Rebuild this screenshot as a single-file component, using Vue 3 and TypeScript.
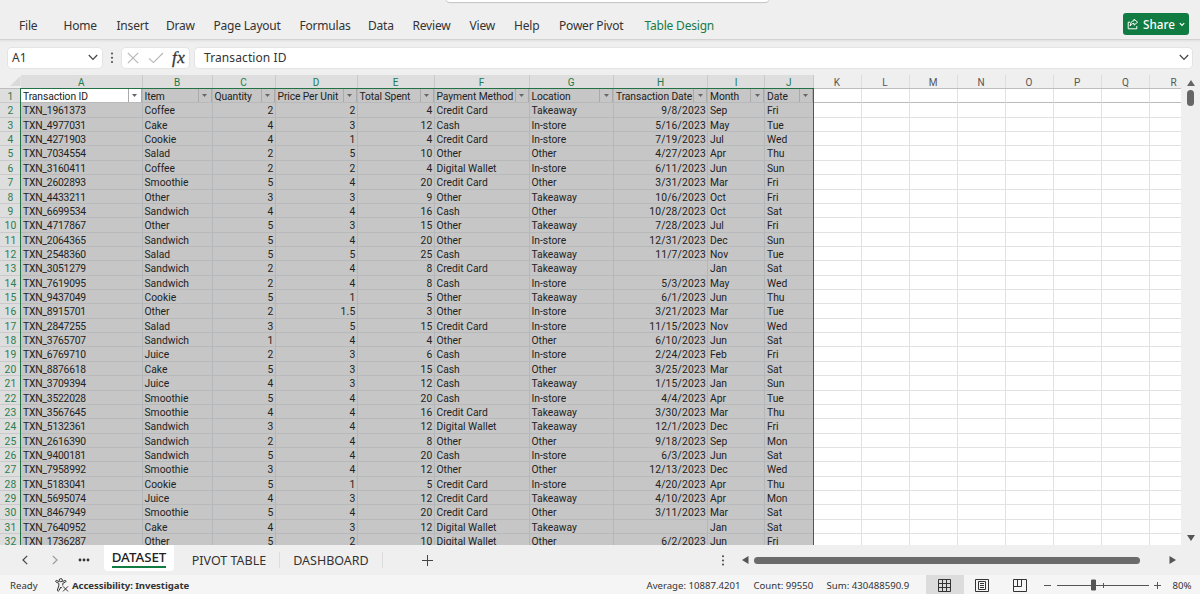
<script setup lang="ts">
interface Column {
  letter: string
  title: string
  numeric: boolean
}

const columns: Column[] = [
  { letter: 'A', title: 'Transaction ID', numeric: false },
  { letter: 'B', title: 'Item', numeric: false },
  { letter: 'C', title: 'Quantity', numeric: true },
  { letter: 'D', title: 'Price Per Unit', numeric: true },
  { letter: 'E', title: 'Total Spent', numeric: true },
  { letter: 'F', title: 'Payment Method', numeric: false },
  { letter: 'G', title: 'Location', numeric: false },
  { letter: 'H', title: 'Transaction Date', numeric: true },
  { letter: 'I', title: 'Month', numeric: false },
  { letter: 'J', title: 'Date', numeric: false },
]
const emptyLetters = ['K', 'L', 'M', 'N', 'O', 'P', 'Q', 'R']

const source = `TXN_1961373|Coffee|2|2|4|Credit Card|Takeaway|9/8/2023|Sep|Fri
TXN_4977031|Cake|4|3|12|Cash|In-store|5/16/2023|May|Tue
TXN_4271903|Cookie|4|1|4|Credit Card|In-store|7/19/2023|Jul|Wed
TXN_7034554|Salad|2|5|10|Other|Other|4/27/2023|Apr|Thu
TXN_3160411|Coffee|2|2|4|Digital Wallet|In-store|6/11/2023|Jun|Sun
TXN_2602893|Smoothie|5|4|20|Credit Card|Other|3/31/2023|Mar|Fri
TXN_4433211|Other|3|3|9|Other|Takeaway|10/6/2023|Oct|Fri
TXN_6699534|Sandwich|4|4|16|Cash|Other|10/28/2023|Oct|Sat
TXN_4717867|Other|5|3|15|Other|Takeaway|7/28/2023|Jul|Fri
TXN_2064365|Sandwich|5|4|20|Other|In-store|12/31/2023|Dec|Sun
TXN_2548360|Salad|5|5|25|Cash|Takeaway|11/7/2023|Nov|Tue
TXN_3051279|Sandwich|2|4|8|Credit Card|Takeaway||Jan|Sat
TXN_7619095|Sandwich|2|4|8|Cash|In-store|5/3/2023|May|Wed
TXN_9437049|Cookie|5|1|5|Other|Takeaway|6/1/2023|Jun|Thu
TXN_8915701|Other|2|1.5|3|Other|In-store|3/21/2023|Mar|Tue
TXN_2847255|Salad|3|5|15|Credit Card|In-store|11/15/2023|Nov|Wed
TXN_3765707|Sandwich|1|4|4|Other|Other|6/10/2023|Jun|Sat
TXN_6769710|Juice|2|3|6|Cash|In-store|2/24/2023|Feb|Fri
TXN_8876618|Cake|5|3|15|Cash|Other|3/25/2023|Mar|Sat
TXN_3709394|Juice|4|3|12|Cash|Takeaway|1/15/2023|Jan|Sun
TXN_3522028|Smoothie|5|4|20|Cash|In-store|4/4/2023|Apr|Tue
TXN_3567645|Smoothie|4|4|16|Credit Card|Takeaway|3/30/2023|Mar|Thu
TXN_5132361|Sandwich|3|4|12|Digital Wallet|Takeaway|12/1/2023|Dec|Fri
TXN_2616390|Sandwich|2|4|8|Other|Other|9/18/2023|Sep|Mon
TXN_9400181|Sandwich|5|4|20|Cash|In-store|6/3/2023|Jun|Sat
TXN_7958992|Smoothie|3|4|12|Other|Other|12/13/2023|Dec|Wed
TXN_5183041|Cookie|5|1|5|Credit Card|In-store|4/20/2023|Apr|Thu
TXN_5695074|Juice|4|3|12|Credit Card|Takeaway|4/10/2023|Apr|Mon
TXN_8467949|Smoothie|5|4|20|Credit Card|Other|3/11/2023|Mar|Sat
TXN_7640952|Cake|4|3|12|Digital Wallet|Takeaway||Jan|Sat
TXN_1736287|Other|5|2|10|Digital Wallet|Other|6/2/2023|Jun|Fri`
const rows: string[][] = source.split('\n').map((line) => line.split('|'))

const menu = ['File', 'Home', 'Insert', 'Draw', 'Page Layout', 'Formulas', 'Data', 'Review', 'View', 'Help', 'Power Pivot', 'Table Design']
</script>

<template>
  <div class="app">
    <header class="ribbon">
      <div class="search-edge"></div>
      <nav class="menu">
        <span v-for="m in menu" :key="m" :class="{ active: m === 'Table Design' }">{{ m }}</span>
      </nav>
      <button class="share">
        <svg width="12" height="12" viewBox="0 0 12 12" fill="none" stroke="#fff" stroke-width="1">
          <path d="M3 4.2H1.2v6.6h8.6V8" />
          <path d="M7 1.2l3.6 3L7 7.2V5.4C5.2 5.4 4.2 6.2 3.2 8c.1-3.3 1.2-5 3.8-5.2z" stroke-linejoin="round" />
        </svg>
        <span>Share</span>
        <svg width="6" height="5" viewBox="0 0 6 5" fill="none" stroke="#fff" stroke-width="1.2"><path d="M.8 1.2L3 3.5l2.2-2.3" /></svg>
      </button>
    </header>

    <section class="formula-bar">
      <div class="name-box">
        <span>A1</span>
        <svg width="10" height="7" viewBox="0 0 10 7" fill="none" stroke="#444" stroke-width="1.2"><path d="M.8 1L5 5.4 9.2 1" /></svg>
      </div>
      <svg class="grip" width="4" height="12" viewBox="0 0 4 12" fill="#444"><circle cx="2" cy="1.5" r="1" /><circle cx="2" cy="5.7" r="1" /><circle cx="2" cy="9.9" r="1" /></svg>
      <div class="actions">
        <svg width="12" height="12" viewBox="0 0 12 12" fill="none" stroke="#b4b4b4" stroke-width="1.1"><path d="M.8.8l10.4 10.4M11.2.8L.8 11.2" /></svg>
        <svg width="16" height="12" viewBox="0 0 16 12" fill="none" stroke="#b4b4b4" stroke-width="1.1"><path d="M1 6.4L5.4 10.6 15 1" /></svg>
        <i class="fx">fx</i>
      </div>
      <div class="formula">
        <span>Transaction ID</span>
        <svg width="10" height="7" viewBox="0 0 10 7" fill="none" stroke="#444" stroke-width="1.2"><path d="M.8 1L5 5.4 9.2 1" /></svg>
      </div>
    </section>

    <main class="workspace">
      <div class="sheet">
        <div class="line letters">
          <div class="corner"><svg width="11" height="10" viewBox="0 0 11 10"><path d="M10.5 0v10H0z" fill="#dadada" /></svg></div>
          <div v-for="c in columns" :key="c.letter" class="letter picked">{{ c.letter }}</div>
          <div v-for="l in emptyLetters" :key="l" class="letter">{{ l }}</div>
        </div>
        <div class="line titles">
          <div class="row-no">1</div>
          <div v-for="(c, i) in columns" :key="c.letter" class="cell title" :class="{ current: i === 0 }">
            <span>{{ c.title }}</span>
            <b class="filter"><svg width="5" height="3" viewBox="0 0 5 3"><path d="M0 0h5L2.5 3z" fill="#666" /></svg></b>
          </div>
          <div v-for="l in emptyLetters" :key="l" class="cell blank"></div>
        </div>
        <div v-for="(r, n) in rows" :key="r[0]" class="line">
          <div class="row-no">{{ n + 2 }}</div>
          <div v-for="(v, i) in r" :key="i" class="cell" :class="{ numeric: columns[i].numeric, id: i === 0 }">{{ v }}</div>
          <div v-for="l in emptyLetters" :key="l" class="cell blank"></div>
        </div>
        <div class="selection"></div>
      </div>
      <aside class="v-scroll">
        <svg width="8" height="6" viewBox="0 0 8 6"><path d="M4 0l4 6H0z" fill="#666" /></svg>
        <div class="v-thumb"></div>
        <svg class="down" width="8" height="6" viewBox="0 0 8 6"><path d="M0 0h8L4 6z" fill="#555" /></svg>
      </aside>
    </main>

    <section class="tabs">
      <svg class="prev" width="6" height="10" viewBox="0 0 6 10" fill="none" stroke="#444" stroke-width="1.2"><path d="M5.2.8L1 5l4.2 4.2" /></svg>
      <svg class="next" width="6" height="10" viewBox="0 0 6 10" fill="none" stroke="#999" stroke-width="1.2"><path d="M.8.8L5 5 .8 9.2" /></svg>
      <svg class="more" width="12" height="4" viewBox="0 0 12 4" fill="#333"><circle cx="2" cy="2" r="1.4" /><circle cx="6" cy="2" r="1.4" /><circle cx="10" cy="2" r="1.4" /></svg>
      <div class="tab on"><span>DATASET</span></div>
      <div class="tab pivot">PIVOT TABLE</div>
      <div class="tab dash">DASHBOARD</div>
      <svg class="plus" width="11" height="11" viewBox="0 0 11 11" stroke="#444" stroke-width="1"><path d="M5.5 0v11M0 5.5h11" /></svg>
      <svg class="dots" width="4" height="11" viewBox="0 0 4 11" fill="#444"><circle cx="2" cy="1.3" r="1" /><circle cx="2" cy="5.4" r="1" /><circle cx="2" cy="9.5" r="1" /></svg>
      <div class="h-scroll">
        <svg width="7" height="8" viewBox="0 0 7 8"><path d="M6.5 0v8L0 4z" fill="#555" /></svg>
        <div class="h-thumb"></div>
        <svg class="right" width="7" height="8" viewBox="0 0 7 8"><path d="M.5 0v8L7 4z" fill="#555" /></svg>
      </div>
    </section>

    <footer class="status">
      <span class="ready">Ready</span>
      <svg class="person" width="14" height="14" viewBox="0 0 14 14" fill="none" stroke="#333" stroke-width="1">
        <circle cx="5.8" cy="2.2" r="1.6" />
        <path d="M4.2 3.6L1.6 2.5C.6 2.2.2 3.6 1 4l2.8 1.3v2.5L2.4 12c-.2 1.1 1.2 1.5 1.6.6L5.8 9l1 1.2M7.4 3.6L10 2.5c1-.3 1.4 1.1.6 1.5L7.8 5.3v2.2M8 8.4l5 5M13 8.4l-5 5" />
      </svg>
      <span class="access">Accessibility: Investigate</span>
      <span class="average">Average: 10887.4201</span>
      <span class="count">Count: 99550</span>
      <span class="sum">Sum: 430488590.9</span>
      <div class="view active">
        <svg width="13" height="13" viewBox="0 0 13 13" fill="none" stroke="#333"><path d="M.5.5h12v12H.5zM.5 4.5h12M.5 8.5h12M4.5.5v12M8.5.5v12" /></svg>
      </div>
      <div class="view">
        <svg width="14" height="13" viewBox="0 0 14 13" fill="none" stroke="#333"><path d="M.5.5h13v12H.5zM3.5 2.5h7v8h-7zM5 4.5h4M5 6.5h4M5 8.5h4" /></svg>
      </div>
      <div class="view">
        <svg width="14" height="13" viewBox="0 0 14 13" fill="none" stroke="#333"><path d="M.5.5h13v12H.5zM4.5.5v7M.5 7.5h8V.5" /></svg>
      </div>
      <svg class="zoom" width="120" height="12" viewBox="0 0 120 12" stroke="#555" fill="none">
        <path d="M1 6.5h7M14 6.5h92M111 6.5h7M114.5 3v7M60.5 4v5" />
        <path d="M48.5 1h4v10h-4z" fill="#555" />
      </svg>
      <span class="percent">80%</span>
    </footer>
  </div>
</template>

<style>
body {
  margin: 0;
  overflow: hidden;
}
</style>

<style scoped>
.app {
  width: 1200px;
  height: 594px;
  display: flex;
  flex-direction: column;
  background: #efefef;
  color: #333;
  font-family: 'Noto Sans', 'Open Sans', sans-serif;
  overflow: hidden;
  white-space: nowrap;
}
svg { display: block; flex: none; }
.ribbon {
  position: relative;
  box-sizing: border-box;
  height: 40px;
  flex: none;
  border-bottom: 1px solid #d2d2d2;
  box-shadow: 0 1px 2px #dedede;
}
.search-edge {
  position: absolute;
  left: 446px;
  top: -8px;
  width: 323px;
  height: 10px;
  background: #fff;
  border-radius: 4px;
  box-shadow: 0 1px 1px #c4c4c4;
}
.menu {
  display: grid;
  grid-template-columns: 44.5px 53px 49.5px 47.5px 86px 68.5px 44.5px 57px 44.5px 45px 85.5px 80px;
  padding-left: 19px;
  line-height: 18px;
  padding-top: 17px;
  font-size: 12px;
  letter-spacing: -0.2px;
}
.menu .active { color: #1b7a45; }
.share {
  position: absolute;
  left: 1123px;
  top: 13px;
  width: 66px;
  height: 22px;
  border: 0;
  border-radius: 3px;
  background: #107c41;
  color: #fff;
  display: flex;
  align-items: center;
  padding: 0 4px;
  gap: 3px;
  font: 500 11.7px 'Noto Sans', sans-serif;
}
.share span { flex: 1; }
.formula-bar {
  height: 35px;
  flex: none;
  display: flex;
  align-items: center;
  padding: 0 8px;
  font-size: 12px;
}
.name-box, .actions, .formula {
  height: 20px;
  background: #fff;
  border-radius: 4px;
  box-shadow: 0 0 0 1px #e4e4e4;
  display: flex;
  align-items: center;
  box-sizing: border-box;
}
.name-box { width: 94px; padding: 0 4px; justify-content: space-between; }
.grip { margin: 0 8px; }
.actions { width: 67px; padding: 0 4px 0 5px; gap: 9px; }
.fx { font: italic 400 17px/18px 'Liberation Serif', serif; margin-left: -1px; letter-spacing: 0.5px; -webkit-text-stroke: 0.3px #333; }
.formula { margin-left: 6px; flex: 1; padding: 0 3px 0 9px; justify-content: space-between; margin-right: 0; letter-spacing: 0.1px; }
.workspace { height: 470px; flex: none; display: flex; overflow: hidden; }
.sheet { position: relative; width: 1181px; overflow: hidden; background: #fff; }
.line {
  display: grid;
  grid-template-columns: 21px 121.5px 70px 63px 82px 77px 95px 84.5px 94px 57px 48.5px 48px 48px 48px 48px 48px 48.5px 48px 48px;
  grid-template-rows: 100%;
  height: 14.37px;
  font: 10.3px/14.3px Roboto, sans-serif;
  letter-spacing: 0;
  color: #222;
}
.letters { height: 14px; box-sizing: border-box; background: #efefef; border-bottom: 1px solid #bdbdbd; }
.corner { display: flex; align-items: flex-end; justify-content: flex-end; padding-bottom: 2px; }
.letter { text-align: center; border-right: 1px solid #dedede; font-size: 10px; line-height: 15px; color: #555; }
.letter.picked { background: #dedede; border-color: #c9c9c9; color: #217a48; }
.row-no { background: #dedede; color: #2c7d50; text-align: center; border-bottom: 1px solid #cacaca; box-sizing: border-box; line-height: 15px; letter-spacing: 0.2px; }
.cell {
  box-sizing: border-box;
  background: #c6c6c6;
  border-right: 1px solid #b4b8ba;
  border-bottom: 1px solid #b7b9ba;
  padding: 0 2px;
  line-height: 15px;
}
.id { letter-spacing: -0.2px; }
.numeric { text-align: right; padding-right: 1px; letter-spacing: 0.2px; }
.blank { background: #fff; border-color: #e2e2e2; }
.title { display: flex; justify-content: space-between; padding-right: 0; letter-spacing: -0.1px; }
.current { background: #fff; }
.filter { width: 12px; flex: none; border: 1px solid #aaa; border-width: 0 1px 0 1px; display: flex; align-items: center; justify-content: center; }
.titles .blank { border-bottom-color: #bbb; }
.selection {
  position: absolute;
  left: 20px;
  top: 13px;
  width: 792px;
  height: 470px;
  border: 1.5px solid #217346;
}
.v-scroll { flex: 1; display: flex; flex-direction: column; align-items: center; padding-top: 5px; box-sizing: border-box; }
.v-thumb { width: 7px; height: 16px; border-radius: 4px; background: #666; margin-top: 4px; }
.down { margin-top: auto; margin-bottom: 4px; }
.tabs { height: 30px; flex: none; display: flex; align-items: center; font-size: 12.5px; letter-spacing: 0; }
.prev { margin-left: 22px; }
.next { margin-left: 24px; }
.more { margin-left: 20px; margin-right: 14px; }
.tab { border-right: 1px solid #ddd; height: 16px; line-height: 17px; text-align: center; box-sizing: border-box; }
.tab.on { width: 70px; height: 26px; background: #fff; border: 0; border-radius: 0 0 4px 4px; margin-bottom: 4px; font-size: 13.3px; font-weight: 500; color: #222; margin-right: 5px; }
.tab.on span { display: inline-block; height: 21px; line-height: 24px; border-bottom: 2px solid #107c41; }
.pivot { width: 101px; }
.dash { width: 103px; }
.plus { margin-left: 39px; }
.dots { margin-left: 288px; }
.h-scroll { width: 440px; margin-left: 17px; display: flex; align-items: center; }
.h-thumb { width: 386px; height: 7px; border-radius: 4px; background: #6b6b6b; margin-left: 5px; }
.right { margin-left: auto; margin-right: 6px; }
.status { flex: 1; background: #f5f5f5; display: flex; align-items: center; font-size: 9.6px; padding-left: 10px; padding-bottom: 0; }
.ready { width: 45px; }
.access { width: 574.5px; margin-left: 3px; font-weight: 700; letter-spacing: -0.07px; }
.average { width: 107px; }
.count { width: 73px; }
.sum { width: 99.5px; }
.view { width: 37.5px; height: 20px; display: flex; align-items: center; justify-content: center; }
.view.active { background: #dcdcdc; }
.zoom { margin-left: 4px; }
.percent { margin-left: 10px; }
</style>
